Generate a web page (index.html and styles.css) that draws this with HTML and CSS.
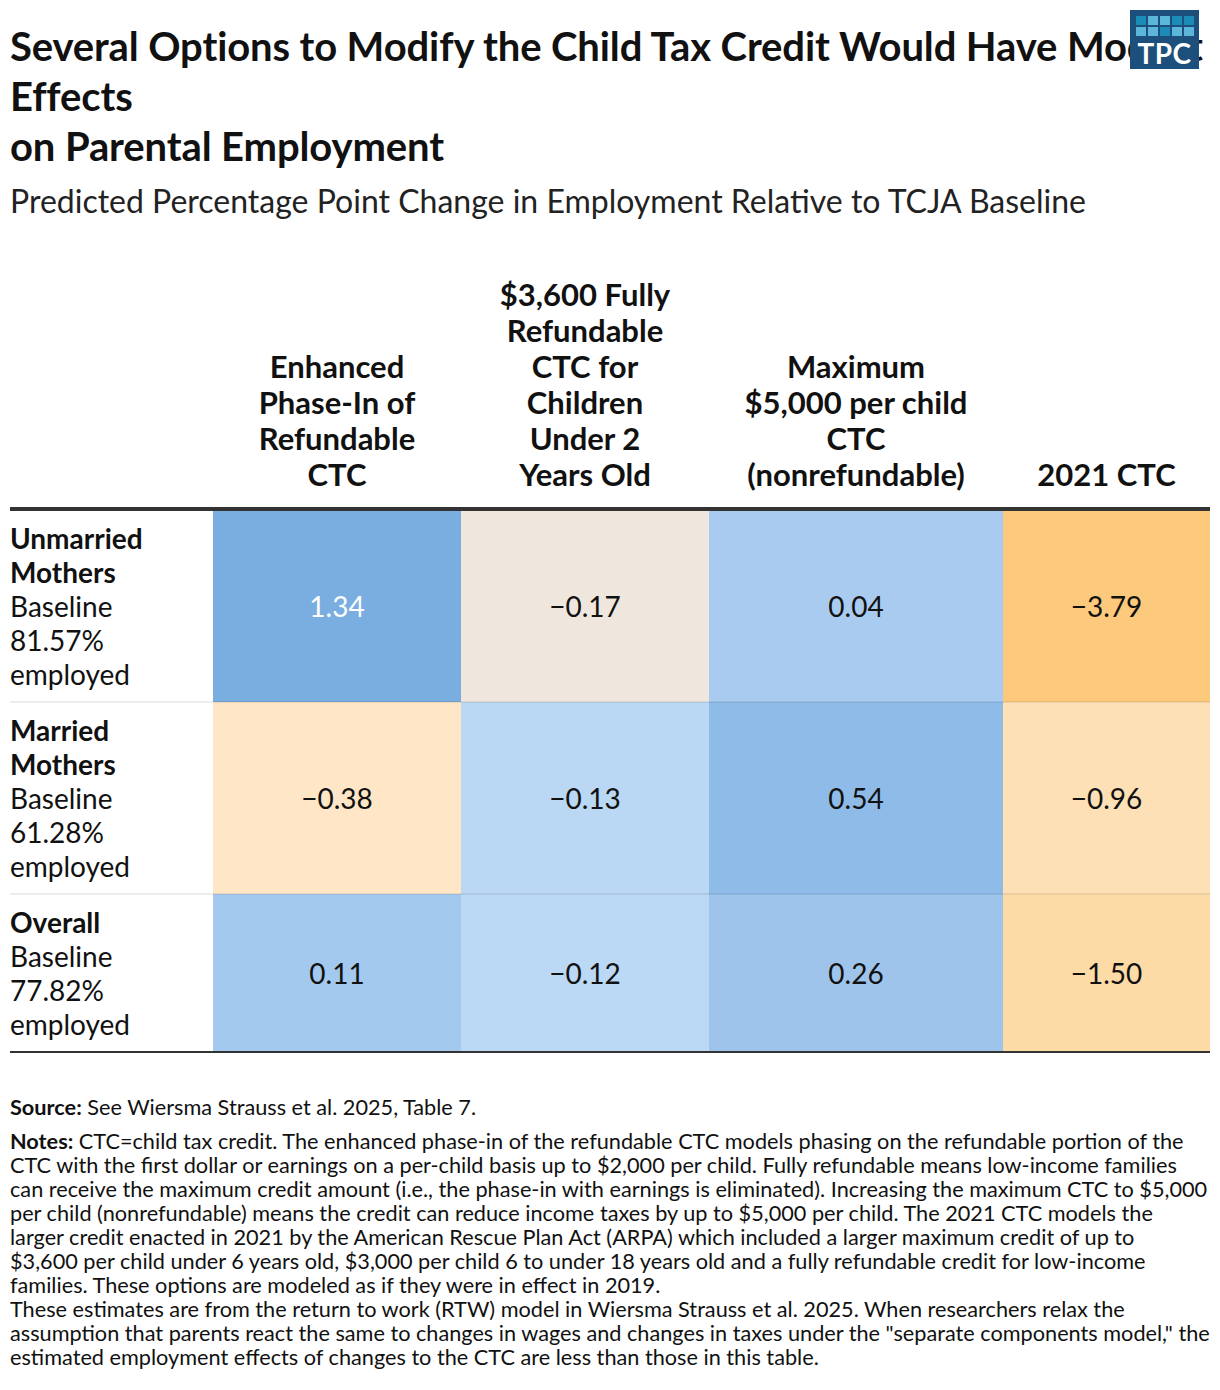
FILE: index.html
```html
<!DOCTYPE html>
<html lang="en">
<head>
<meta charset="utf-8">
<title>Child Tax Credit Options</title>
<link rel="stylesheet" href="styles.css">
</head>
<body>
<div class="page">
  <header class="head">
    <h1 class="title">Several Options to Modify the Child Tax Credit Would Have Modest Effects<br>on Parental Employment</h1>
    <p class="subtitle">Predicted Percentage Point Change in Employment Relative to TCJA Baseline</p>
    <div class="logo" aria-label="TPC">
      <div class="logo-grid">
        <span class="sq dk"></span><span class="sq lt"></span><span class="sq lt"></span><span class="sq dk"></span><span class="sq dk"></span>
        <span class="sq lt"></span><span class="sq lt"></span><span class="sq dk"></span><span class="sq lt"></span><span class="sq lt"></span>
      </div>
      <div class="logo-text">TPC</div>
    </div>
  </header>

  <table class="data">
    <colgroup>
      <col class="c-label"><col class="c-a"><col class="c-b"><col class="c-c"><col class="c-d">
    </colgroup>
    <thead>
      <tr>
        <th class="th-label"></th>
        <th>Enhanced Phase-In of Refundable CTC</th>
        <th>$3,600 Fully Refundable CTC for Children Under 2 Years Old</th>
        <th>Maximum $5,000 per child CTC (nonrefundable)</th>
        <th>2021 CTC</th>
      </tr>
    </thead>
    <tbody>
      <tr>
        <td class="label"><strong>Unmarried Mothers</strong> Baseline 81.57% employed</td>
        <td class="v v-134">1.34</td>
        <td class="v v-m017">−0.17</td>
        <td class="v v-004">0.04</td>
        <td class="v v-m379">−3.79</td>
      </tr>
      <tr>
        <td class="label"><strong>Married Mothers</strong> Baseline 61.28% employed</td>
        <td class="v v-m038">−0.38</td>
        <td class="v v-m013">−0.13</td>
        <td class="v v-054">0.54</td>
        <td class="v v-m096">−0.96</td>
      </tr>
      <tr>
        <td class="label"><strong>Overall</strong> Baseline 77.82% employed</td>
        <td class="v v-011">0.11</td>
        <td class="v v-m012">−0.12</td>
        <td class="v v-026">0.26</td>
        <td class="v v-m150">−1.50</td>
      </tr>
    </tbody>
  </table>

  <footer class="foot">
    <p class="source"><strong>Source:</strong> See Wiersma Strauss et al. 2025, Table 7.</p>
    <p class="notes"><strong>Notes:</strong> CTC=child tax credit. The enhanced phase-in of the refundable CTC models phasing on the refundable portion of the CTC with the first dollar or earnings on a per-child basis up to $2,000 per child. Fully refundable means low-income families can receive the maximum credit amount (i.e., the phase-in with earnings is eliminated). Increasing the maximum CTC to $5,000 per child (nonrefundable) means the credit can reduce income taxes by up to $5,000 per child. The 2021 CTC models the larger credit enacted in 2021 by the American Rescue Plan Act (ARPA) which included a larger maximum credit of up to<br>$3,600 per child under 6 years old, $3,000 per child 6 to under 18 years old and a fully refundable credit for low-income families. These options are modeled as if they were in effect in 2019.<br>These estimates are from the return to work (RTW) model in Wiersma Strauss et al. 2025. When researchers relax the assumption that parents react the same to changes in wages and changes in taxes under the "separate components model," the estimated employment effects of changes to the CTC are less than those in this table.</p>
  </footer>
</div>
</body>
</html>
```

FILE: styles.css
```css
* { box-sizing: border-box; }

html, body {
  margin: 0;
  padding: 0;
  background: #ffffff;
}

body {
  font-family: Lato, "Liberation Sans", sans-serif;
  color: #111;
}

.page {
  width: 1220px;
  padding: 0 10px;
}

.head {
  position: relative;
}

.title {
  margin: 0;
  padding-top: 21px;
  font-size: 40px;
  line-height: 50px;
  font-weight: 700;
  letter-spacing: -0.12px;
  color: #111;
}

.subtitle {
  margin: 10px 0 0;
  font-size: 32px;
  line-height: 40px;
  font-weight: 400;
  color: #222;
}

.logo {
  position: absolute;
  top: 10px;
  right: 11px;
  width: 69px;
  height: 59px;
  background: #1d4f7c;
  display: flex;
  flex-direction: column;
  align-items: center;
  padding-top: 6px;
}

.logo-grid {
  display: grid;
  grid-template-columns: repeat(5, 10px);
  grid-template-rows: repeat(2, 9px);
  gap: 2px;
}

.sq { display: block; }
.sq.dk { background: #1b8cb8; }
.sq.lt { background: #5bb6da; }

.logo-text {
  color: #fff;
  font-weight: 700;
  font-size: 28px;
  line-height: 28px;
  margin-top: 3px;
  letter-spacing: 0.5px;
}

.data {
  margin-top: 40px;
  width: 1200px;
  border-collapse: collapse;
  table-layout: fixed;
}

.c-label { width: 203px; }
.c-a { width: 248px; }
.c-b { width: 248px; }
.c-c { width: 294px; }
.c-d { width: 207px; }

.data th {
  font-size: 31px;
  line-height: 36px;
  font-weight: 700;
  color: #111;
  text-align: center;
  vertical-align: bottom;
  padding: 15px 32px;
  border-bottom: 4px solid #333;
}

.data td {
  padding: 10px 0;
  border-bottom: 2px solid rgba(0, 0, 0, 0.07);
}

.data tbody tr:last-child td {
  border-bottom: 2px solid #333;
}

.label {
  font-size: 28px;
  line-height: 34px;
  padding-right: 12px !important;
  vertical-align: top;
  color: #111;
}

.label strong {
  display: block;
  font-weight: 700;
}

.v {
  font-size: 28px;
  line-height: 34px;
  text-align: center;
  vertical-align: middle;
  color: #111;
}

.v-134 { background: #7aaee0; color: #fff; }
.v-m017 { background: #efe7dd; }
.v-004 { background: #aacbf0; }
.v-m379 { background: #fdc97c; }
.v-m038 { background: #fee6c6; }
.v-m013 { background: #bad7f4; }
.v-054 { background: #8fbbe8; }
.v-m096 { background: #fde0b5; }
.v-011 { background: #a4c9ef; }
.v-m012 { background: #bbd8f4; }
.v-026 { background: #9fc4ec; }
.v-m150 { background: #fddba7; }

.foot {
  margin-top: 42px;
  font-size: 21.7px;
  line-height: 24px;
  color: #111;
}

.source {
  margin: 0;
}

.notes {
  margin: 10px 0 0;
}

.foot strong { font-weight: 700; }
```
